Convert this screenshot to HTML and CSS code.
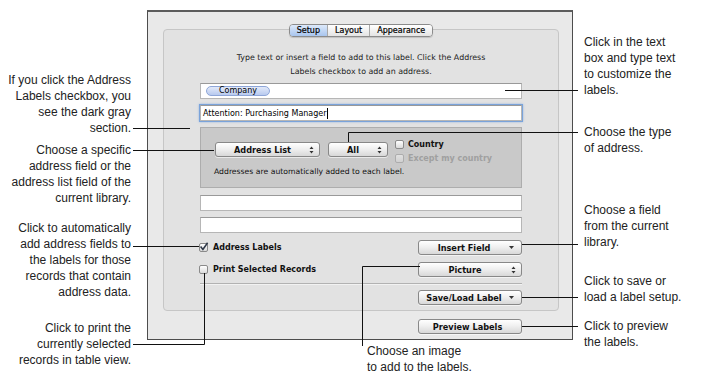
FILE: index.html
```html
<!DOCTYPE html>
<html lang="en">
<head>
    <meta charset="UTF-8">
    <meta name="viewport" content="width=device-width, initial-scale=1">
    <title>Labels - Setup</title>
    <link rel="stylesheet" href="styles.css">
</head>
<body>
    <div class="figure">
        <!-- callouts on the left -->
        <div class="notes-left">
            <p class="note l1">If you click the Address<br>Labels checkbox, you<br>see the dark gray<br>section.</p>
            <p class="note l2">Choose a specific<br>address field or the<br>address list field of the<br>current library.</p>
            <p class="note l3">Click to automatically<br>add address fields to<br>the labels for those<br>records that contain<br>address data.</p>
            <p class="note l4">Click to print the<br>currently selected<br>records in table view.</p>
        </div>

        <div class="center">
            <div class="window">
                <div class="tabs">
                    <span class="tab on">Setup</span>
                    <span class="tab">Layout</span>
                    <span class="tab">Appearance</span>
                </div>

                <div class="group">
                    <p class="hint">Type text or insert a field to add to this label. Click the Address<br>Labels checkbox to add an address.</p>
                    <div class="field"><span class="token">Company</span></div>
                    <div class="field focus">Attention: Purchasing Manager<span class="caret"></span></div>

                    <div class="address">
                        <div class="address-row">
                            <div class="btn list"><span class="btn-label">Address List</span><svg class="updown" width="5" height="8" viewBox="0 0 5 8"><path d="M2.5 0.5 L4.5 3 H0.5 Z M2.5 7.5 L4.5 5 H0.5 Z" fill="#333"/></svg></div>
                            <div class="btn all"><span class="btn-label">All</span><svg class="updown" width="5" height="8" viewBox="0 0 5 8"><path d="M2.5 0.5 L4.5 3 H0.5 Z M2.5 7.5 L4.5 5 H0.5 Z" fill="#333"/></svg></div>
                            <div class="checks">
                                <div class="check"><span class="box"></span>Country</div>
                                <div class="check off"><span class="box"></span>Except my country</div>
                            </div>
                        </div>
                        <p class="small">Addresses are automatically added to each label.</p>
                    </div>

                    <div class="field plain"></div>
                    <div class="field plain"></div>

                    <div class="opt-row">
                        <div class="check left"><span class="box"><svg width="10" height="10" viewBox="0 0 10 10"><path d="M1.6 4.6 L3.9 7.4 L8.6 0.8" fill="none" stroke="#2f3848" stroke-width="1.6"/></svg></span>Address Labels</div>
                        <div class="btn side"><span class="btn-label">Insert Field</span><svg class="down" width="5" height="3" viewBox="0 0 5 3"><path d="M0 0 H5 L2.5 3 Z" fill="#333"/></svg></div>
                    </div>
                    <div class="opt-row">
                        <div class="check left"><span class="box"></span>Print Selected Records</div>
                        <div class="btn side"><span class="btn-label">Picture</span><svg class="updown" width="5" height="8" viewBox="0 0 5 8"><path d="M2.5 0.5 L4.5 3 H0.5 Z M2.5 7.5 L4.5 5 H0.5 Z" fill="#333"/></svg></div>
                    </div>
                    <div class="sep"></div>
                    <div class="btn-row">
                        <div class="btn side"><span class="btn-label">Save/Load Label</span><svg class="down" width="5" height="3" viewBox="0 0 5 3"><path d="M0 0 H5 L2.5 3 Z" fill="#333"/></svg></div>
                    </div>
                </div>

                <div class="btn-row footer">
                    <div class="btn side"><span class="btn-label">Preview Labels</span></div>
                </div>
            </div>
            <p class="note bottom">Choose an image<br>to add to the labels.</p>
        </div>

        <!-- callouts on the right -->
        <div class="notes-right">
            <p class="note r1">Click in the text<br>box and type text<br>to customize the<br>labels.</p>
            <p class="note r2">Choose the type<br>of address.</p>
            <p class="note r3">Choose a field<br>from the current<br>library.</p>
            <p class="note r4">Click to save or<br>load a label setup.</p>
            <p class="note r5">Click to preview<br>the labels.</p>
        </div>

        <!-- leader lines -->
        <svg class="leaders" width="704" height="381" viewBox="0 0 704 381">
            <g fill="none" stroke="#111" stroke-width="1">
                <path d="M505 90.5 H578"/>
                <path d="M348.5 142 V132.5 H578"/>
                <path d="M522 244.5 H578"/>
                <path d="M522 297.5 H578"/>
                <path d="M522 326.5 H578"/>
                <path d="M133 128.5 H190"/>
                <path d="M133 150.5 H214"/>
                <path d="M133 246.5 H199"/>
                <path d="M133 344.5 H204.5 V273"/>
                <path d="M420 266.5 H362.5 V346"/>
            </g>
        </svg>
    </div>
</body>
</html>
```

FILE: styles.css
```css
body {
    margin: 0;
    background: #fff;
}

.figure {
    position: relative;
    display: flex;
    width: 704px;
    height: 381px;
    overflow: hidden;
    font-family: "Liberation Sans", Arial, sans-serif;
}

/* callouts */
.note {
    margin: 0;
    font-size: 12px;
    line-height: 16px;
    color: #222;
    white-space: nowrap;
}

.notes-left {
    flex: none;
    width: 147px;
    padding-right: 16px;
    box-sizing: border-box;
    text-align: right;
}

.l1 { margin-top: 72px; }
.l2 { margin-top: 6px; }
.l3 { margin-top: 14px; }
.l4 { margin-top: 20px; }

.notes-right {
    flex: none;
    width: 131px;
    padding-left: 11px;
    box-sizing: border-box;
}

.r1 { margin-top: 34px; }
.r2 { margin-top: 26px; }
.r3 { margin-top: 46px; }
.r4 { margin-top: 23px; }
.r5 { margin-top: 13px; }

.bottom {
    margin: 3px 0 0 220px;
}

.leaders {
    position: absolute;
    left: 0;
    top: 0;
    pointer-events: none;
}

/* dialog window */
.center {
    flex: none;
    width: 426px;
    padding-top: 10px;
}

.window {
    box-sizing: border-box;
    height: 330px;
    display: flex;
    flex-direction: column;
    padding: 12px 13px 0 15px;
    border: 1px solid #4d4d4d;
    border-top: 2px solid #5c5c5c;
    background: #e9e9e9;
    font-family: "DejaVu Sans", sans-serif;
    color: #111;
}

.tabs {
    position: relative;
    z-index: 1;
    align-self: center;
    display: flex;
    box-sizing: border-box;
    height: 13px;
    border: 1px solid #8b8b8b;
    border-radius: 4px;
    overflow: hidden;
    box-shadow: 0 1px 1px rgba(0, 0, 0, 0.15);
}

.tab {
    padding: 0 7px;
    font-size: 8px;
    line-height: 11px;
    color: #000;
    background: linear-gradient(#ffffff, #e4e4e4);
    border-left: 1px solid #a8a8a8;
    -webkit-text-stroke: 0.2px #000;
}

.tab:first-child {
    border-left: none;
}

.tab.on {
    background: linear-gradient(#dde9fa, #a8c5ee);
}

.group {
    margin-top: -8px;
    padding: 21px 36px 5px;
    border: 1px solid #c6c6c6;
    border-radius: 4px;
    background: #e2e2e2;
}

.hint {
    margin: 0;
    font-size: 7.9px;
    line-height: 14px;
    text-align: center;
    color: #222;
}

.field {
    box-sizing: border-box;
    height: 16px;
    margin-top: 4px;
    display: flex;
    align-items: center;
    padding-left: 2px;
    border: 1px solid #b6b6b6;
    border-top-color: #999;
    background: #fff;
    font-size: 8px;
    color: #000;
}

.field.focus {
    margin-top: 6px;
    box-shadow: 0 0 0 1px #7aa3da, 0 0 2px 1px rgba(120, 165, 225, 0.7);
}

.field.plain {
    margin-top: 6px;
}

.token {
    margin-left: 3px;
    box-sizing: border-box;
    height: 10px;
    padding: 0 12px;
    border: 1px solid #8ea6d8;
    border-radius: 5px;
    background: linear-gradient(#e2e9f9, #b8caef);
    font-size: 8px;
    line-height: 8px;
}

.caret {
    width: 1px;
    height: 11px;
    background: #000;
}

/* dark gray address section */
.address {
    box-sizing: border-box;
    height: 61px;
    margin-top: 6px;
    padding: 9px 0 0 14px;
    border: 1px solid #adadad;
    background: #c9c9c9;
}

.address + .field {
    margin-top: 7px;
}

.address-row {
    display: flex;
    align-items: flex-start;
}

.address-row .btn {
    margin-top: 5px;
}

.btn.list { width: 105px; }
.btn.all { width: 60px; margin-left: 8px; }

.checks {
    margin-left: 7px;
}

.checks .check {
    height: 14px;
}

.checks .box {
    margin-right: 4px;
}

.small {
    margin: 0 0 0 -1px;
    font-size: 7.7px;
    line-height: 13px;
    color: #111;
}

/* buttons and popups */
.btn {
    box-sizing: border-box;
    height: 15px;
    display: flex;
    align-items: center;
    padding-right: 5px;
    border: 1px solid #888;
    border-radius: 3px;
    background: linear-gradient(#ffffff, #f0f0f0 45%, #d8d8d8);
    box-shadow: 0 1px 0 rgba(255, 255, 255, 0.6);
    font-size: 8.2px;
    font-weight: bold;
    color: #111;
}

.btn-label {
    flex: 1;
    text-align: center;
}

.btn .down {
    margin-right: 2px;
}

.btn.side {
    width: 104px;
}

.check {
    display: flex;
    align-items: center;
    font-size: 8px;
    font-weight: bold;
    color: #111;
}

.check.off {
    color: #a0a0a0;
}

.check.off .box {
    opacity: 0.45;
}

.box {
    box-sizing: border-box;
    width: 9px;
    height: 9px;
    margin-right: 5px;
    border: 1px solid #8a8a8a;
    border-radius: 2px;
    background: linear-gradient(#ffffff, #dadada);
}

.box svg {
    display: block;
    margin: -2px 0 0 -1px;
}

.check.left {
    margin-left: -1px;
}

.opt-row {
    display: flex;
    align-items: center;
    justify-content: space-between;
    height: 15px;
    margin-top: 7px;
}

.sep {
    height: 1px;
    margin-top: 6px;
    background: #b2b2b2;
    box-shadow: 0 1px 0 #f2f2f2;
}

.btn-row {
    display: flex;
    justify-content: flex-end;
    margin-top: 6px;
}

.footer {
    margin-top: 8px;
    padding-right: 37px;
}
```
